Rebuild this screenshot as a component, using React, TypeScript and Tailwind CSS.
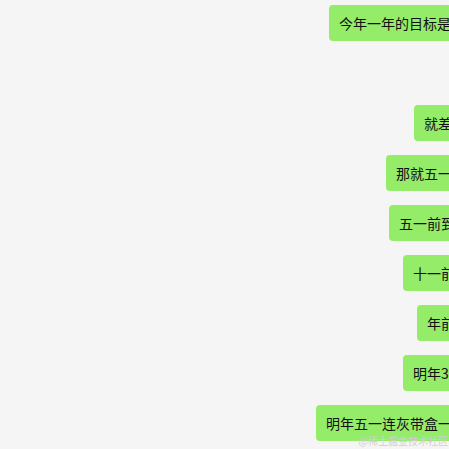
export default function App() {
  const messages = [
    { text: "今年一年的目标是减肥二十斤", w: "w-[271px]" },
    null,
    { text: "就差五斤了", w: "w-[186px]" },
    { text: "那就五一前吧", w: "w-[214px]" },
    { text: "五一前到不了", w: "w-[211px]" },
    { text: "十一前吧", w: "w-[197px]" },
    { text: "年前吧", w: "w-[183px]" },
    { text: "明年3月吧", w: "w-[197px]" },
    { text: "明年五一连灰带盒一起卖了", w: "w-[284px]" },
  ];
  return (
    <div
      className="relative h-[449px] w-[449px] overflow-hidden bg-[#f5f5f5]"
      style={{ fontFamily: '"Noto Sans CJK SC", "Liberation Sans", sans-serif' }}
    >
      <div className="flex w-[600px] flex-col items-end gap-[14px] pt-[5px]">
        {messages.map((m, i) =>
          m ? (
            <div
              key={i}
              className={`${m.w} h-[36px] overflow-hidden whitespace-nowrap rounded bg-[#95ec69] pl-[10px] text-[14px] leading-[36px] text-[#111]`}
            >
              {m.text}
            </div>
          ) : (
            <div key={i} className="h-[36px]" />
          )
        )}
      </div>
      <div className="absolute bottom-[2px] right-[1px] text-[10px] leading-[12px] text-[#d0d0d0]">
        @稀土掘金技术社区
      </div>
    </div>
  );
}
